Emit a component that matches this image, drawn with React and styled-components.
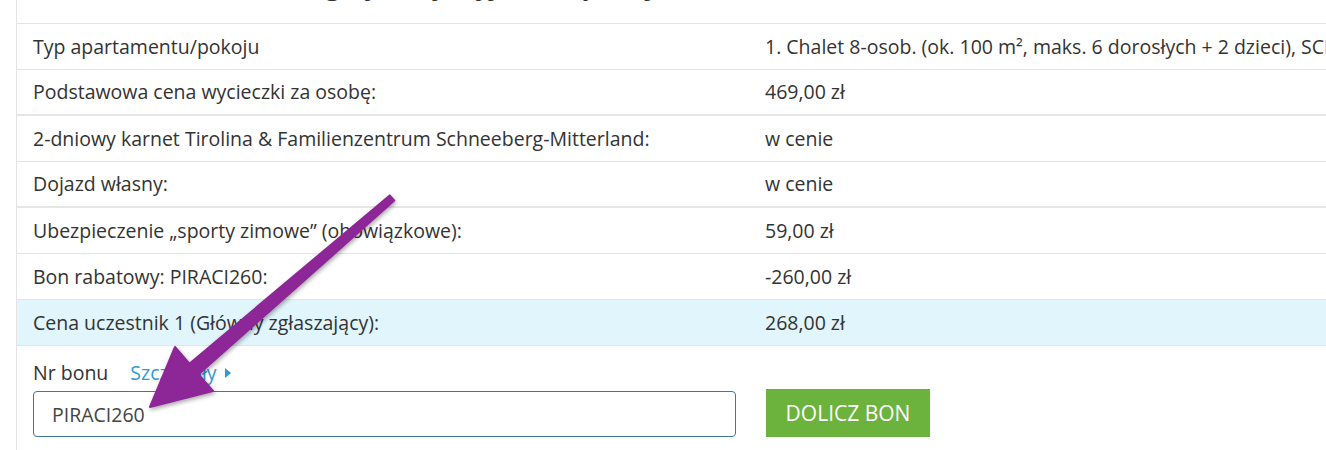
import styled, { createGlobalStyle } from "styled-components";

const GlobalStyle = createGlobalStyle`
  html, body {
    margin: 0;
    padding: 0;
    background: #fff;
    overflow: hidden;
  }
  body {
    font-family: "Open Sans", "Liberation Sans", sans-serif;
    color: #333;
  }
`;

const Page = styled.div`
  position: relative;
  width: 1326px;
  height: 450px;
  overflow: hidden;
`;

const Panel = styled.div`
  margin-left: 16px;
  border-left: 1px solid #e4e4e4;
  min-height: 450px;
  width: 1500px;
`;

const TitleBox = styled.div`
  height: 23px;
  overflow: hidden;
`;

const Title = styled.h2`
  margin: -28px 0 0 0;
  padding-left: 240px;
  font-size: 26px;
  line-height: 26px;
  font-weight: 700;
  color: #333;
  white-space: nowrap;
`;

const Table = styled.div`
  display: flex;
  flex-direction: column;
  border-top: 1px solid #e4e4e4;
`;

const Row = styled.div`
  display: grid;
  grid-template-columns: 732px 1fr;
  height: ${(p) => (p.$thick ? 44 : 45)}px;
  align-items: center;
  border-bottom: ${(p) => (p.$thick ? "2px solid #e6e6e6" : "1px solid #e4e4e4")};
  background: ${(p) => (p.$highlight ? "#e1f5fc" : "#fff")};
`;

const Cell = styled.div`
  padding: 0 16px;
  font-size: 19.5px;
  line-height: 26px;
  white-space: nowrap;
  color: #333;
`;

const Voucher = styled.div`
  padding: 14px 16px 0;
`;

const LabelLine = styled.div`
  display: flex;
  align-items: center;
  gap: 22px;
  height: 26px;
  font-size: 19.5px;
  line-height: 26px;
`;

const Details = styled.a`
  display: flex;
  align-items: center;
  gap: 8px;
  color: #2f9ccf;
  text-decoration: none;
`;

const Caret = styled.span`
  width: 0;
  height: 0;
  border-top: 5px solid transparent;
  border-bottom: 5px solid transparent;
  border-left: 6px solid #2f9ccf;
`;

const FormRow = styled.div`
  display: flex;
  align-items: flex-end;
  gap: 30px;
  margin-top: 3px;
`;

const Input = styled.input`
  box-sizing: border-box;
  width: 703px;
  height: 46px;
  padding: 0 18px;
  border: 1px solid #3c7a98;
  border-radius: 4px;
  font-family: "Open Sans", "Liberation Sans", sans-serif;
  font-size: 19.5px;
  color: #444;
  outline: none;
`;

const Button = styled.button`
  box-sizing: border-box;
  width: 164px;
  height: 48px;
  border: none;
  background: #6cb33e;
  color: #fff;
  font-family: "Open Sans", "Liberation Sans", sans-serif;
  font-size: 21px;
  text-transform: uppercase;
  cursor: pointer;
`;

const Annotation = styled.svg`
  position: absolute;
  left: 0;
  top: 0;
  width: 1326px;
  height: 450px;
  pointer-events: none;
`;

const rows = [
  ["Typ apartamentu/pokoju", "1. Chalet 8-osob. (ok. 100 m², maks. 6 dorosłych + 2 dzieci), SCHNEEBERG Dorf"],
  ["Podstawowa cena wycieczki za osobę:", "469,00 zł", true],
  ["2-dniowy karnet Tirolina & Familienzentrum Schneeberg-Mitterland:", "w cenie"],
  ["Dojazd własny:", "w cenie", true],
  ["Ubezpieczenie „sporty zimowe” (obowiązkowe):", "59,00 zł"],
  ["Bon rabatowy: PIRACI260:", "-260,00 zł"],
  ["Cena uczestnik 1 (Główny zgłaszający):", "268,00 zł", false, true],
];

export default function App() {
  return (
    <Page>
      <GlobalStyle />
      <Panel>
        <TitleBox>
          <Title>Szczegóły ceny wyjazdu i pokoju</Title>
        </TitleBox>
        <Table>
          {rows.map(([label, value, thick, highlight]) => (
            <Row key={label} $thick={thick} $highlight={highlight}>
              <Cell>{label}</Cell>
              <Cell>{value}</Cell>
            </Row>
          ))}
        </Table>
        <Voucher>
          <LabelLine>
            <span>Nr bonu</span>
            <Details href="#">
              Szczegóły <Caret />
            </Details>
          </LabelLine>
          <FormRow>
            <Input defaultValue="PIRACI260" />
            <Button>Dolicz bon</Button>
          </FormRow>
        </Voucher>
      </Panel>
      <Annotation viewBox="0 0 1326 450">
        <defs>
          <filter id="shadow" x="-20%" y="-20%" width="140%" height="140%">
            <feDropShadow dx="1" dy="2" stdDeviation="2" floodColor="#000" floodOpacity="0.35" />
          </filter>
        </defs>
        <polygon
          points="394.3,200.6 198.6,374.3 213,391 150,407 175,347 189.4,363.7 389.7,195.4"
          fill="#8d2796"
          stroke="#8d2796"
          strokeWidth="2"
          strokeLinejoin="round"
          filter="url(#shadow)"
        />
      </Annotation>
    </Page>
  );
}
